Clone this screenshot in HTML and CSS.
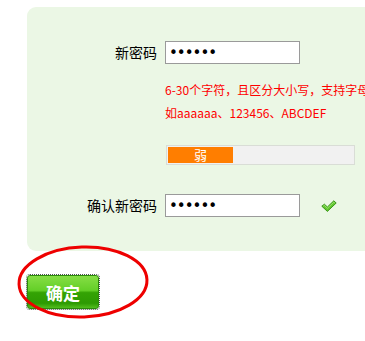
FILE: index.html
```html
<!DOCTYPE html>
<html lang="zh-CN">
<head>
  <meta charset="UTF-8" />
  <title>修改密码</title>
  <link rel="stylesheet" href="styles.css">
</head>
<body>
  <div class="panel">
    <div class="form-row">
      <label class="form-label" for="newPwd">新密码</label>
      <input type="password" id="newPwd" class="pwd-input" value="123456" />
    </div>

    <div class="hint">
      <div class="hint-line">6-30个字符，且区分大小写，支持字母</div>
      <div class="hint-line">如aaaaaa、123456、ABCDEF</div>
    </div>

    <div class="strength">
      <div class="strength-fill">弱</div>
    </div>

    <div class="form-row confirm-row">
      <label class="form-label" for="confirmPwd">确认新密码</label>
      <input type="password" id="confirmPwd" class="pwd-input" value="123456" />
      <svg class="check" width="16" height="12" viewBox="0 0 16 12">
        <path d="M0.8 6.2 L3.4 4.2 L6.4 7 L12.8 0.8 L15.2 3 L6.4 11.4 Z" fill="#62c82e" stroke="#2e8c10" stroke-width="0.9" stroke-linejoin="round" />
        <path d="M2.2 6.2 L3.4 5.4 L6.4 8.2 L12.8 2.2 L13.8 3" fill="none" stroke="#a6e67c" stroke-width="0.8" />
      </svg>
    </div>
  </div>

  <div class="submit-wrap">
    <button class="submit-btn">确定</button>
    <svg class="circle-mark" width="136" height="78" viewBox="0 0 136 78">
      <ellipse cx="68" cy="39" rx="64" ry="35" fill="none" stroke="#ee0000" stroke-width="3" transform="rotate(-2 68 39)" />
    </svg>
  </div>
</body>
</html>
```

FILE: styles.css
```css
html, body {
  margin: 0;
  padding: 0;
  height: 100%;
  overflow: hidden;
  background: #fff;
  font-family: "Noto Sans CJK SC", sans-serif;
  color: #000;
}

.panel {
  margin: 7px 0 0 27px;
  width: 420px;
  padding: 34px 0 34px 0;
  background: #ebf7e5;
  border-radius: 9px;
  box-sizing: border-box;
}

.form-row {
  display: flex;
  align-items: center;
  gap: 8px;
}

.form-label {
  width: 130px;
  text-align: right;
  font-size: 14px;
  line-height: 23px;
}

.pwd-input {
  width: 135px;
  height: 23px;
  box-sizing: border-box;
  border: 1px solid #9a9a9a;
  background: #fff;
  padding: 0 3px;
  font-family: "DejaVu Sans", sans-serif;
  font-size: 15px;
  letter-spacing: -1px;
  color: #000;
}

.hint {
  margin: 14px 0 0 138px;
  color: #ff0000;
  font-size: 12px;
  line-height: 23px;
}

.hint-line {
  white-space: nowrap;
}

.strength {
  margin: 21px 0 0 139px;
  width: 189px;
  height: 20px;
  box-sizing: border-box;
  border: 1px solid #d9ddd6;
  background: #f1f1f1;
  padding: 1px;
}

.strength-fill {
  width: 65px;
  height: 16px;
  background: #ff7e00;
  color: #fff;
  font-size: 13px;
  line-height: 16px;
  text-align: center;
}

.confirm-row {
  margin-top: 29px;
}

.check {
  margin-left: 13px;
}

.submit-wrap {
  position: relative;
  margin: 24px 0 0 27px;
  width: 72px;
  height: 34px;
}

.submit-btn {
  display: block;
  width: 72px;
  height: 34px;
  border: 1px solid #2b8a0a;
  border-radius: 3px;
  outline: 1px dotted #555;
  background: linear-gradient(#86de45 0%, #64cf28 45%, #34a304 52%, #2d9a02 85%, #52bd1e 100%);
  color: #fff;
  font-family: "Noto Sans CJK SC", sans-serif;
  font-size: 17px;
  font-weight: bold;
  padding: 0;
  cursor: pointer;
}

.circle-mark {
  position: absolute;
  left: -12px;
  top: -32px;
}
```
